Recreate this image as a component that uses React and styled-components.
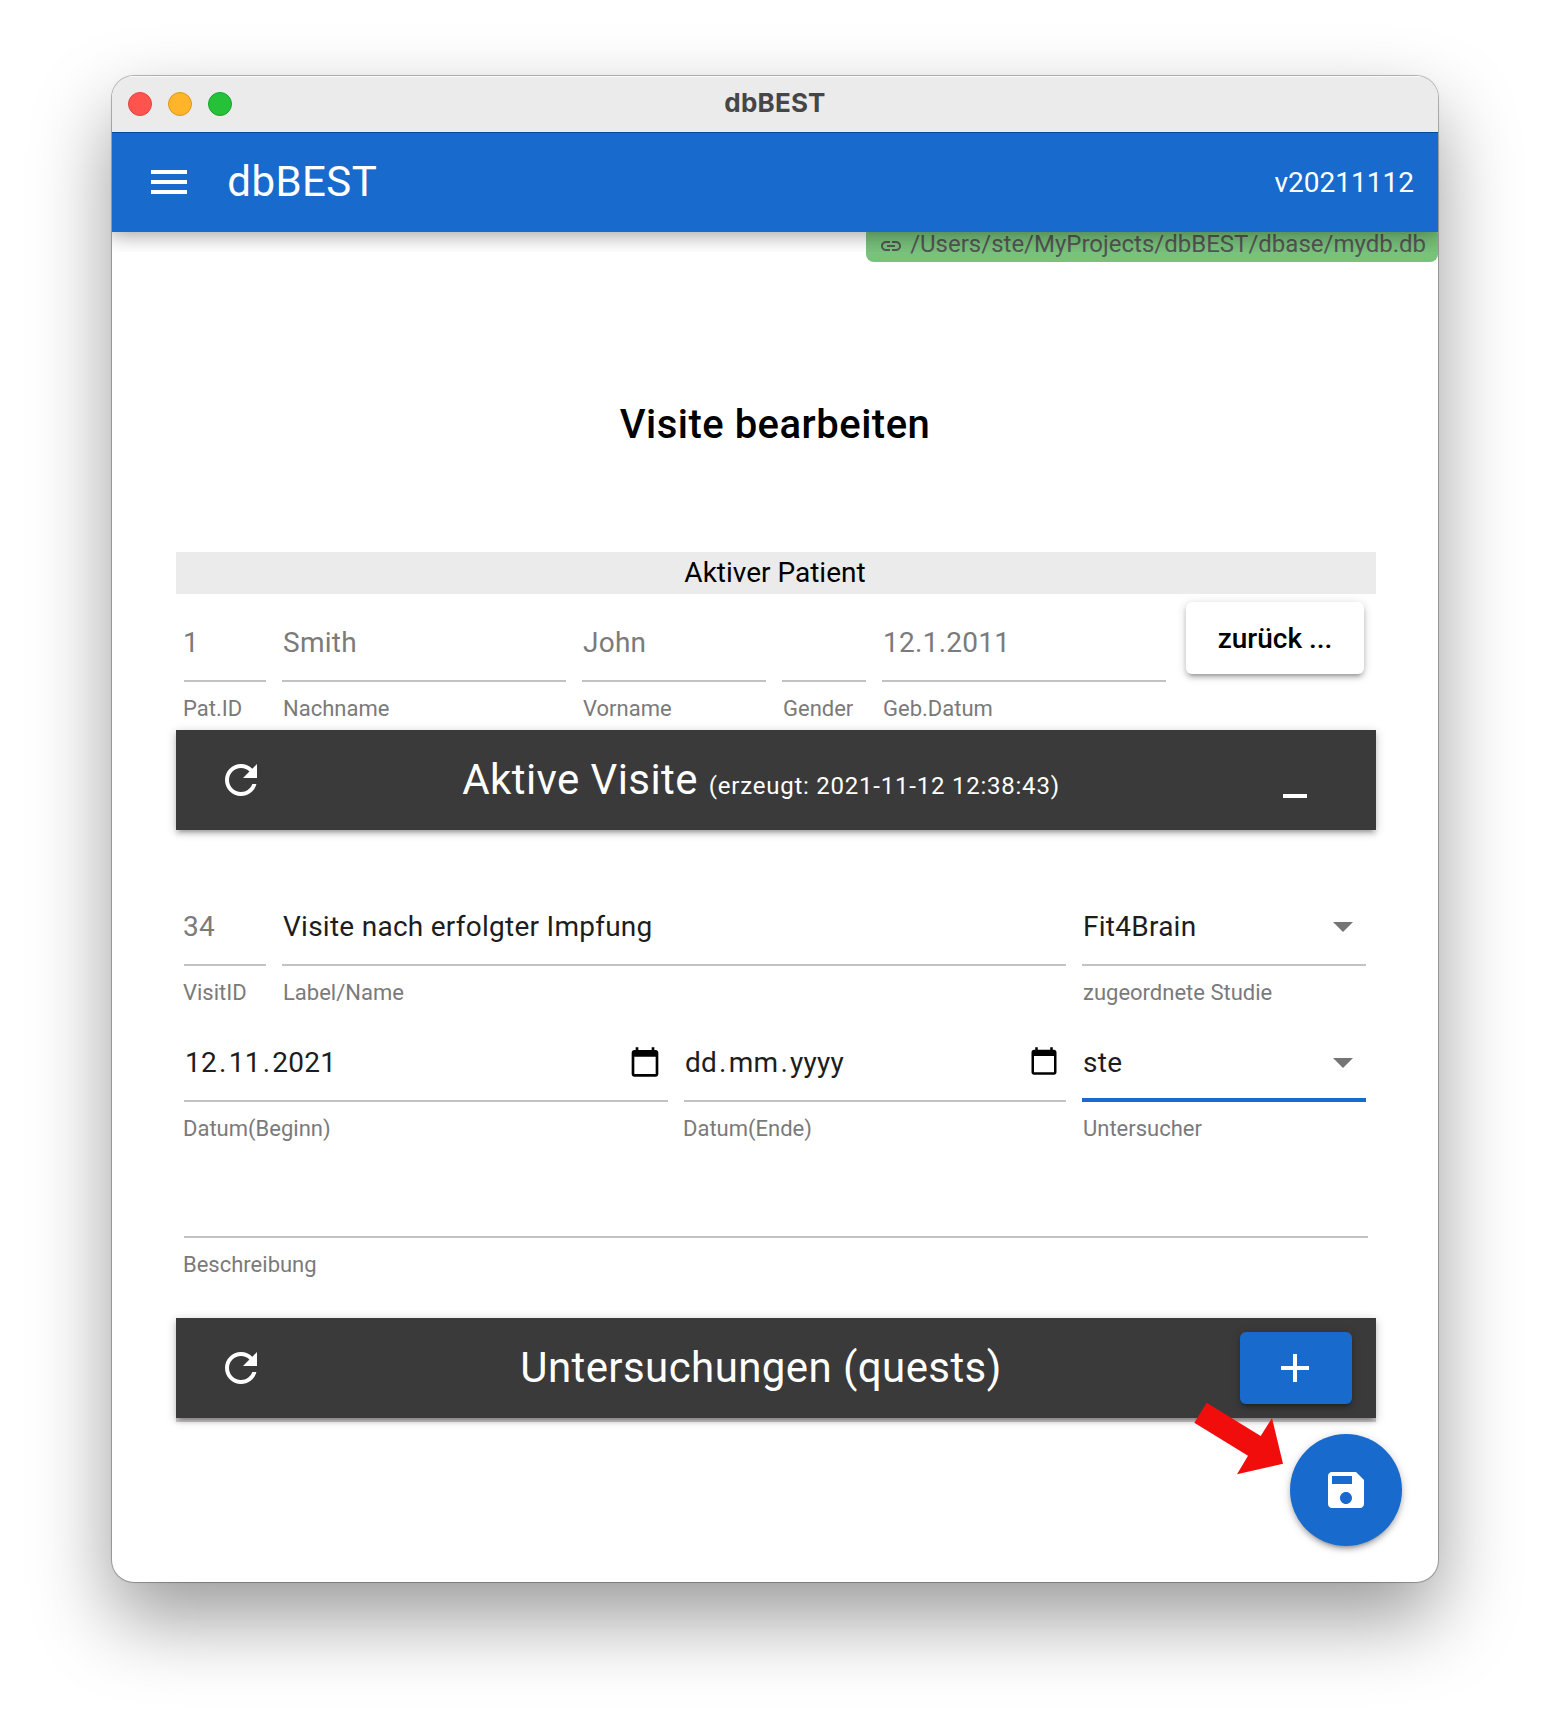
import React from "react";
import styled, { createGlobalStyle, css } from "styled-components";

const BLUE = "#196acd";
const raised = css`
  box-shadow: 0 2px 10px rgba(0, 0, 0, 0.2), 0 4px 4px rgba(0, 0, 0, 0.14),
    0 6px 2px -4px rgba(0, 0, 0, 0.12)
    ${(p) => (p.$ledge ? ", 0 4px 0 rgba(40, 20, 30, 0.2)" : "")};
`;

const GlobalStyle = createGlobalStyle`
  * { box-sizing: border-box; }
  body {
    margin: 0;
    background: #fff;
    color: #000;
    font-family: Roboto, "Liberation Sans", sans-serif;
    font-size: 28px;
    overflow: hidden;
  }
`;

const Desktop = styled.main`
  height: 1730px;
  padding: 76px 112px 148px;
`;

const Window = styled.div`
  position: relative;
  height: 1506px;
  border-radius: 22px;
  background: #fff;
  box-shadow: 0 0 0 1px rgba(0, 0, 0, 0.24), 0 0 3px rgba(0, 0, 0, 0.1),
    0 36px 80px rgba(0, 0, 0, 0.4);
`;

const Clip = styled.div`
  display: flex;
  flex-direction: column;
  height: 100%;
  border-radius: 22px;
  overflow: hidden;
`;

const TitleBar = styled.div`
  display: grid;
  grid-template-columns: 1fr auto 1fr;
  align-items: center;
  flex: none;
  height: 56px;
  padding: 0 16px;
  background: #ebebec;
  box-shadow: inset 0 2px 1px -1px #fafafa;
`;

const Lights = styled.div`
  display: flex;
  gap: 16px;
`;

const Light = styled.span`
  width: 24px;
  height: 24px;
  border-radius: 50%;
  background: ${(p) => p.$fill};
  border: 1px solid ${(p) => p.$edge};
`;

const WindowTitle = styled.div`
  padding-bottom: 2px;
  font: 700 26px/52px Inter, sans-serif;
  letter-spacing: 0.2px;
  color: #464646;
`;

const Header = styled.header`
  position: relative;
  z-index: 1;
  flex: none;
  display: flex;
  align-items: center;
  height: 100px;
  padding: 0 24px 0 33.3px;
  background: ${BLUE};
  color: #fff;
  box-shadow: inset 0 1px 0 #0747a0, 0 0 20px 4px rgba(0, 0, 0, 0.2),
    0 0 20px rgba(0, 0, 0, 0.24);
  clip-path: inset(0 0 -20px 0);
`;

const AppName = styled.div`
  flex: 1;
  padding: 0 0 2px 34px;
  font-size: 42px;
  letter-spacing: 0.42px;
`;

const Glyph = styled.svg`
  display: block;
  flex: none;
  width: ${(p) => p.$size || 48}px;
  height: ${(p) => p.$size || 48}px;
  fill: ${(p) => p.$color || "currentColor"};
`;

const PathBadge = styled.div`
  align-self: flex-end;
  flex: none;
  display: flex;
  align-items: center;
  gap: 8px;
  height: 36px;
  margin-top: -6px;
  padding: 0 12px;
  border-radius: 8px;
  background: #78c27b;
  color: #555;
  font-size: 24px;
  white-space: nowrap;

  ${Glyph} {
    margin: 3px -1px 0 1px;
  }
`;

const Content = styled.section`
  display: flex;
  flex-direction: column;
  padding: 0 62px 0 64px;
`;

const PageTitle = styled.h1`
  margin: 131px 0 0;
  padding-right: 2px;
  font-size: 40px;
  line-height: 64px;
  font-weight: 500;
  letter-spacing: 0.5px;
  text-align: center;
`;

const Band = styled.div`
  margin-top: 95px;
  padding-right: 2px;
  background: #ebebeb;
  line-height: 42px;
  text-align: center;
`;

const Row = styled.div`
  display: grid;
  grid-template-columns: ${(p) => p.$cols};
  column-gap: 16px;
  padding: 8px 10px 8px 8px;
`;

const Field = styled.div`
  height: 120px;
`;

const Control = styled.div`
  display: flex;
  align-items: center;
  justify-content: space-between;
  height: 80px;
  border-bottom: ${(p) => (p.$focused ? `4px solid ${BLUE}` : "2px solid #c2c2c2")};
  padding-top: ${(p) => (p.$focused ? 4 : 2)}px;
  color: ${(p) => (p.$disabled ? "#7b7b7b" : "#1d1d1d")};
  letter-spacing: 0.26px;

  > ${Glyph} {
    margin-right: -1px;
  }
`;

const Value = styled.span`
  margin-left: ${(p) => (p.$outdent ? -1 : 1)}px;
`;

const DatePart = styled.span`
  padding: 0 2px;
`;

const Hint = styled.div`
  margin: 16px 0 0 ${(p) => (p.$outdent ? -1 : 1)}px;
  font-size: 22px;
  line-height: 22px;
  color: #7a7a7a;
  white-space: nowrap;
`;

const CalendarSlot = styled.span`
  display: flex;
  align-items: flex-start;
  height: 32px;
  padding-right: 7px;
`;

const ButtonFace = styled.button`
  display: flex;
  align-items: center;
  justify-content: center;
  height: 72px;
  border: 0;
  border-radius: 6px;
  padding: 0;
  font: 500 28px Roboto, sans-serif;
  background: ${(p) => (p.$primary ? BLUE : "#fff")};
  color: ${(p) => (p.$primary ? "#fff" : "#000")};
  ${raised}
`;

const BackButton = styled(ButtonFace)`
  width: 178px;
  margin-left: 4px;
`;

const AddButton = styled(ButtonFace)`
  width: 112px;
  padding-right: 2px;
`;

const Toolbar = styled.div`
  display: flex;
  align-items: center;
  height: 100px;
  padding: 0 24px;
  background: #3a3a3a;
  color: #fff;
  ${raised}
`;

const ToolSlot = styled.div`
  display: flex;
  justify-content: center;
  width: ${(p) => p.$width}px;
  padding-right: ${(p) => p.$inset || 0}px;
`;

const ToolbarTitle = styled.div`
  flex: 1;
  padding-bottom: 2px;
  text-align: center;
  font-size: 42px;
  letter-spacing: 0.42px;
  white-space: nowrap;
`;

const Created = styled.span`
  font-size: 24px;
  letter-spacing: 0.77px;
`;

const Form = styled.div`
  display: flex;
  flex-direction: column;
  padding: 48px 0 32px;
`;

const SaveButton = styled(ButtonFace)`
  position: absolute;
  right: 36px;
  bottom: 36px;
  width: 112px;
  height: 112px;
  border-radius: 50%;
`;

const Pointer = styled.svg`
  position: absolute;
  left: 1082px;
  top: 1326px;
  width: 90px;
  height: 74px;
  fill: #f20d0d;
`;

const PATHS = {
  menu: "M3 18h18v-2H3v2zm0-5h18v-2H3v2zm0-7v2h18V6H3z",
  link: "M3.9 12c0-1.71 1.39-3.1 3.1-3.1h4V7H7c-2.76 0-5 2.24-5 5s2.24 5 5 5h4v-1.9H7c-1.71 0-3.1-1.39-3.1-3.1zM8 13h8v-2H8v2zm9-6h-4v1.9h4c1.71 0 3.1 1.39 3.1 3.1s-1.39 3.1-3.1 3.1h-4V17h4c2.76 0 5-2.24 5-5s-2.24-5-5-5z",
  refresh:
    "M17.65 6.35C16.2 4.9 14.21 4 12 4c-4.42 0-7.99 3.58-7.99 8s3.57 8 7.99 8c3.73 0 6.84-2.55 7.73-6h-2.08c-.82 2.33-3.04 4-5.65 4-3.31 0-6-2.69-6-6s2.69-6 6-6c1.66 0 3.14.69 4.22 1.78L13 11h7V4l-2.35 2.35z",
  minimize: "M6 19h12v2H6z",
  add: "M19 13h-6v6h-2v-6H5v-2h6V5h2v6h6v2z",
  drop: "M7 10l5 5 5-5z",
  calendar:
    "M20 3h-1V1h-2v2H7V1H5v2H4c-1.1 0-2 .9-2 2v16c0 1.1.9 2 2 2h16c1.1 0 2-.9 2-2V5c0-1.1-.9-2-2-2zm0 18H4V8h16v13z",
  save: "M17 3H5c-1.11 0-2 .9-2 2v14c0 1.1.89 2 2 2h14c1.1 0 2-.9 2-2V7l-4-4zm-5 16c-1.66 0-3-1.34-3-3s1.34-3 3-3 3 1.34 3 3-1.34 3-3 3zm3-10H5V5h10v4z",
};

const Icon = ({ name, size, color }) => (
  <Glyph viewBox="0 0 24 24" $size={size} $color={color} aria-hidden="true">
    <path d={PATHS[name]} />
  </Glyph>
);

const TextField = ({ label, value, disabled, focused, select, outdent }) => (
  <Field>
    <Control $disabled={disabled} $focused={focused}>
      <Value $outdent={outdent}>{value}</Value>
      {select && <Icon name="drop" color="#757575" />}
    </Control>
    <Hint $outdent={outdent}>{label}</Hint>
  </Field>
);

const DateField = ({ label, parts, iconSize }) => (
  <Field>
    <Control>
      <Value $outdent>
        {parts.map((part, i) => (
          <React.Fragment key={i}>
            {i > 0 && "."}
            <DatePart>{part}</DatePart>
          </React.Fragment>
        ))}
      </Value>
      <CalendarSlot>
        <Icon name="calendar" size={iconSize} color="#000" />
      </CalendarSlot>
    </Control>
    <Hint $outdent>{label}</Hint>
  </Field>
);

export default function App() {
  return (
    <Desktop>
      <GlobalStyle />
      <Window>
        <Clip>
          <TitleBar>
            <Lights>
              <Light $fill="#ff544d" $edge="#e2443f" />
              <Light $fill="#ffb429" $edge="#dc981f" />
              <Light $fill="#25c138" $edge="#1ba22c" />
            </Lights>
            <WindowTitle>dbBEST</WindowTitle>
          </TitleBar>
          <Header>
            <Icon name="menu" />
            <AppName>dbBEST</AppName>
            <span>v20211112</span>
          </Header>
          <PathBadge>
            <Icon name="link" size={24} />
            /Users/ste/MyProjects/dbBEST/dbase/mydb.db
          </PathBadge>
          <Content>
            <PageTitle>Visite bearbeiten</PageTitle>
            <Band>Aktiver Patient</Band>
            <Row $cols="82px 284px 184px 84px 284px 1fr">
              <TextField label="Pat.ID" value="1" disabled outdent />
              <TextField label="Nachname" value="Smith" disabled />
              <TextField label="Vorname" value="John" disabled />
              <TextField label="Gender" value="" disabled />
              <TextField label="Geb.Datum" value="12.1.2011" disabled />
              <BackButton>zurück ...</BackButton>
            </Row>
            <Toolbar>
              <ToolSlot $width={82}>
                <Icon name="refresh" />
              </ToolSlot>
              <ToolbarTitle>
                Aktive Visite <Created>(erzeugt: 2021-11-12 12:38:43)</Created>
              </ToolbarTitle>
              <ToolSlot $width={112} $inset={2}>
                <Icon name="minimize" />
              </ToolSlot>
            </Toolbar>
            <Form>
              <Row $cols="82px 784px 284px">
                <TextField label="VisitID" value="34" disabled outdent />
                <TextField label="Label/Name" value="Visite nach erfolgter Impfung" />
                <TextField label="zugeordnete Studie" value="Fit4Brain" select />
              </Row>
              <Row $cols="484px 382px 284px">
                <DateField label="Datum(Beginn)" parts={["12", "11", "2021"]} iconSize={32} />
                <DateField label="Datum(Ende)" parts={["dd", "mm", "yyyy"]} iconSize={30} />
                <TextField label="Untersucher" value="ste" select focused />
              </Row>
              <Row $cols="1184px">
                <TextField label="Beschreibung" value="" outdent />
              </Row>
            </Form>
            <Toolbar $ledge>
              <ToolSlot $width={82}>
                <Icon name="refresh" />
              </ToolSlot>
              <ToolbarTitle>Untersuchungen (quests)</ToolbarTitle>
              <AddButton $primary>
                <Icon name="add" />
              </AddButton>
            </Toolbar>
          </Content>
        </Clip>
        <SaveButton $primary>
          <Icon name="save" />
        </SaveButton>
        <Pointer viewBox="1194 1402 90 74">
          <path d="M1206.7 1402.7L1260.7 1436L1272 1418L1283 1463.7L1237 1474.3L1248 1455.7L1194.3 1422.7z" />
        </Pointer>
      </Window>
    </Desktop>
  );
}
